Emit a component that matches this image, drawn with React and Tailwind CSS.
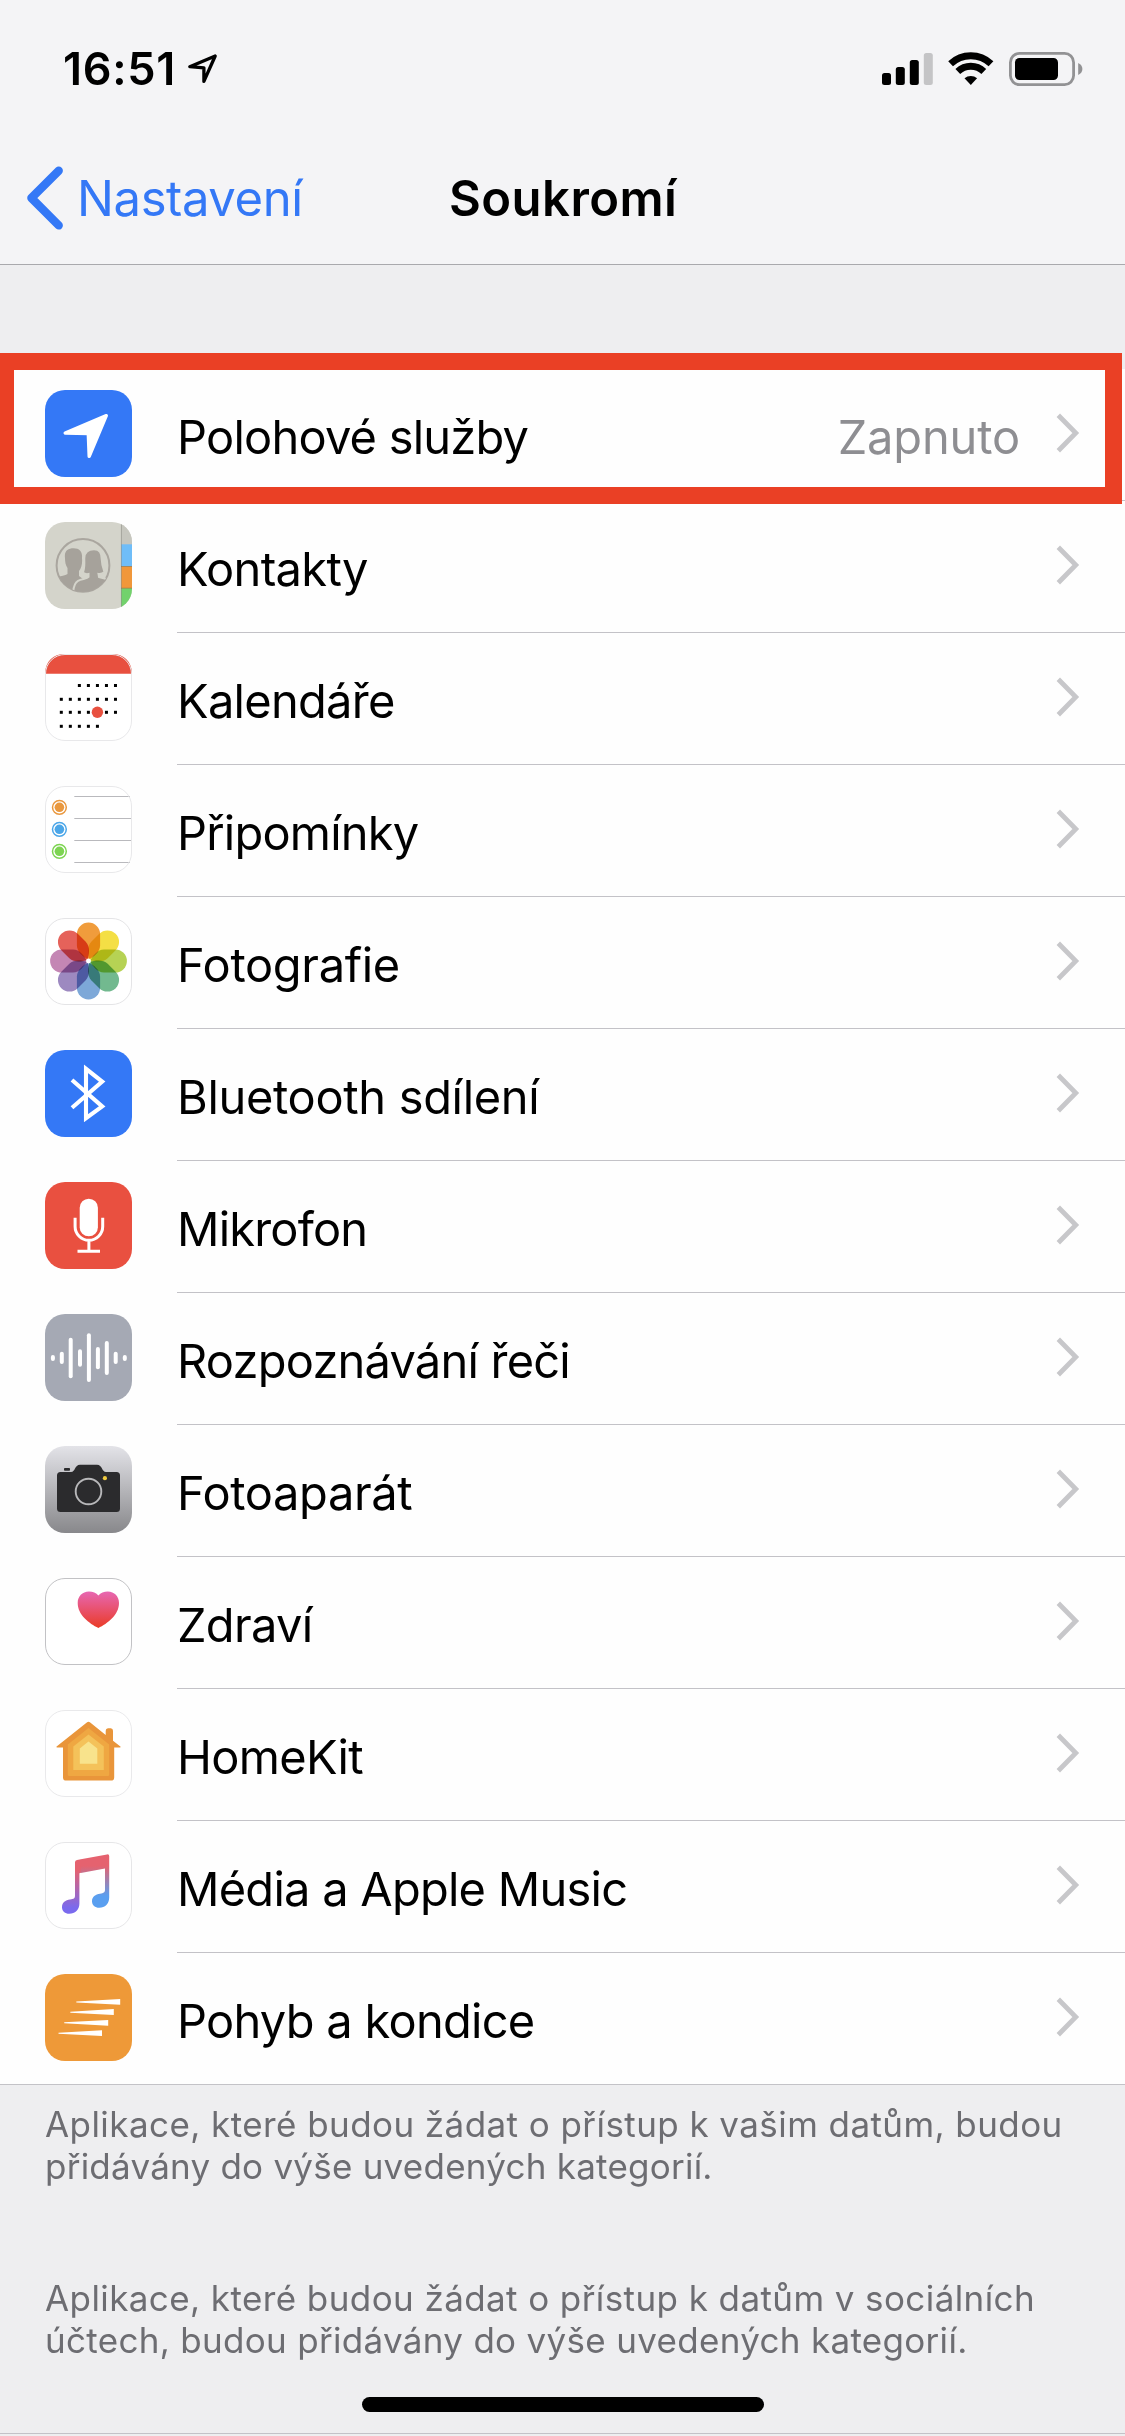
const calendarDots = [
  [2, 3, 4, 5, 6],
  [0, 1, 2, 3, 4, 5, 6],
  [0, 1, 2, 3, 5, 6],
  [0, 1, 2, 3, 4],
];
const calendarRows = [31.5, 45.3, 58.3, 72.3];

const petals = [
  "#f09c3c",
  "#f4df45",
  "#b6d254",
  "#72b98f",
  "#7da8d8",
  "#9d89c0",
  "#c486b4",
  "#e5625a",
];

const waveBars = [
  [7.9, 41, 47],
  [16.8, 37.7, 50],
  [25.7, 23.7, 64.3],
  [35, 35.3, 52.7],
  [43.9, 19.3, 68],
  [52.9, 33, 55.3],
  [61.8, 27, 61],
  [70.7, 37.7, 50],
  [79.8, 41, 47],
];

function Tile({ fill, stroke, children }) {
  return (
    <svg viewBox="0 0 87 87" className="mt-[21px] size-[87px] shrink-0">
      <rect width="87" height="87" rx="20" fill={fill} />
      {children}
      {stroke && (
        <rect x="0.5" y="0.5" width="86" height="86" rx="19.5" fill="none" stroke={stroke} />
      )}
    </svg>
  );
}

function LocationIcon() {
  return (
    <Tile fill="#3478f6">
      <path
        d="M61.3 25.6 L20.2 43 L43.3 43.6 L44.2 66.4 Z"
        fill="#fff"
        stroke="#fff"
        strokeWidth="3.4"
        strokeLinejoin="round"
      />
    </Tile>
  );
}

function ContactsIcon() {
  return (
    <Tile fill="#d4d4cb">
      <defs>
        <clipPath id="contactsTile">
          <rect width="87" height="87" rx="20" />
        </clipPath>
        <clipPath id="contactsCircle">
          <circle cx="38" cy="43.4" r="26.4" />
        </clipPath>
      </defs>
      <g clipPath="url(#contactsTile)">
        <rect x="76" width="11" height="23" fill="#c6c6be" />
        <rect x="76" y="22.3" width="11" height="22.4" fill="#6fbdf8" />
        <rect x="76" y="44.3" width="11" height="22.4" fill="#f0973a" />
        <rect x="76" y="66.3" width="11" height="21" fill="#72d26c" />
        <path d="M76.4 0 V87" stroke="#8f8f88" strokeWidth="1" opacity="0.6" />
        <path d="M76 44.5 H87 M76 66.2 H87" stroke="#7d6a4a" strokeWidth="1" opacity="0.5" />
      </g>
      <circle cx="38" cy="43.4" r="26.4" fill="none" stroke="#aaa69f" strokeWidth="2" />
      <g clipPath="url(#contactsCircle)" fill="#a6a29b">
        <path d="M20 36 C19 29 23 26.3 28.5 26.3 C35 26.3 37.5 30 37 36 C37.5 42 36.5 46 34 49 L34 54 L38 57 L30 63 L28 72 L8 72 L8 56 C14 54 20 54 22.5 52 L22.5 46 C20.5 43 20 40 20 36 Z" />
        <path
          d="M49 27.3 C55 27.3 56.5 31 56.7 37 C56.8 43 58 46 59.5 50 C57.5 52.2 55.5 52.2 53.5 52 L54 55 C60 57 66 57 70 60 L70 74 L28 74 C28 66 29 61 33 58.8 C37 56.8 42 57 43.5 55 L43.5 52 C41.5 52.5 39.5 52 37.8 50.5 C40 46 39.2 41 39.3 36 C39.6 30 43 27.3 49 27.3 Z"
          stroke="#d4d4cb"
          strokeWidth="2"
        />
      </g>
    </Tile>
  );
}

function CalendarIcon() {
  return (
    <Tile fill="#fff" stroke="#e8e8ea">
      {calendarDots.map((cols, r) =>
        cols.map((c) => (
          <rect
            key={`${r}-${c}`}
            x={14.8 + c * 9.03}
            y={calendarRows[r] - 1.5}
            width="3"
            height="3"
            fill="#000"
          />
        ))
      )}
      <circle cx="52.4" cy="58.3" r="5.7" fill="#e8503f" />
      <path d="M0 19.7 C0.3 7.5 8 0 20 0 H67 C79 0 86.7 7.5 87 19.7 Z" fill="#e8503f" />
    </Tile>
  );
}

function RemindersIcon() {
  return (
    <Tile fill="#fff" stroke="#e8e8ea">
      <path
        d="M29.3 10.5 H85 M29.3 32.5 H87 M29.3 54.5 H87 M29.3 76.5 H85"
        stroke="#b9b9bd"
        strokeWidth="1"
      />
      {["#e9983f", "#4ba6e8", "#7dd452"].map((color, i) => (
        <g key={color}>
          <circle cx="14.4" cy={21.3 + i * 22} r="6.9" fill="none" stroke={color} strokeWidth="1.5" />
          <circle cx="14.4" cy={21.3 + i * 22} r="4.8" fill={color} />
        </g>
      ))}
    </Tile>
  );
}

function PhotosIcon() {
  return (
    <Tile fill="#fff" stroke="#e4e4e6">
      <g className="isolate">
        {petals.map((color, i) => (
          <path
            key={color}
            d="M-11.6 -26.8 A11.6 11.6 0 0 1 11.6 -26.8 V-15.5 C11.6 -9 5 -4 0 -1.5 C-5 -4 -11.6 -9 -11.6 -15.5 Z"
            fill={color}
            transform={`translate(43.5 43) rotate(${i * 45})`}
            className="mix-blend-multiply"
          />
        ))}
      </g>
      <circle cx="43.5" cy="43" r="2.4" fill="#fff" />
    </Tile>
  );
}

function BluetoothIcon() {
  return (
    <Tile fill="#3478f6">
      <path
        d="M27 30 L57.2 56.4 L41 68.2 V18.8 L57.2 31.6 L27 57.8"
        fill="none"
        stroke="#fff"
        strokeWidth="4.1"
      />
    </Tile>
  );
}

function MicIcon() {
  return (
    <Tile fill="#e95040">
      <rect x="34.7" y="16.7" width="18.2" height="37.6" rx="9.1" fill="#fff" />
      <path
        d="M30.1 35.7 V44.5 A13.8 13.8 0 0 0 57.7 44.5 V35.7 M43.9 58.3 V69 M32.5 69.2 H55"
        fill="none"
        stroke="#fff"
        strokeWidth="3"
      />
    </Tile>
  );
}

function SpeechIcon() {
  return (
    <Tile fill="#a5a9b4">
      {waveBars.map(([x, top, bottom]) => (
        <rect key={x} x={x - 2} y={top} width="4" height={bottom - top} rx="2" fill="#fff" />
      ))}
    </Tile>
  );
}

function CameraIcon() {
  return (
    <Tile fill="url(#cameraBg)">
      <defs>
        <linearGradient id="cameraBg" x1="0" y1="0" x2="0" y2="1">
          <stop offset="0" stopColor="#e3e3e8" />
          <stop offset="1" stopColor="#88888b" />
        </linearGradient>
      </defs>
      <path
        d="M15.5 26 H26 C30.5 26 29.5 18.8 35 18.8 H52 C57.5 18.8 56.5 26 61 26 H71.5 Q75 26 75 29.5 V62.5 Q75 66 71.5 66 H15.5 Q12 66 12 62.5 V29.5 Q12 26 15.5 26 Z"
        fill="#2b2b2d"
      />
      <rect x="19" y="22" width="6" height="2.7" rx="0.8" fill="#2b2b2d" />
      <circle cx="43.5" cy="45.5" r="12.8" fill="none" stroke="#b8b8ba" strokeWidth="1.9" />
      <circle cx="59.9" cy="32.2" r="2.1" fill="#f0cb40" />
    </Tile>
  );
}

function HealthIcon() {
  return (
    <Tile fill="#fff" stroke="#c2c2c5">
      <defs>
        <linearGradient id="heart" x1="0" y1="0" x2="0" y2="1">
          <stop offset="0" stopColor="#e767b2" />
          <stop offset="1" stopColor="#ea3b26" />
        </linearGradient>
      </defs>
      <path
        d="M53.4 17.6 C55.5 15 59 13.6 62.8 13.6 C69.4 13.6 74 18.6 74 25 C74 37 62.5 45.5 53.4 50 C44.3 45.5 32.7 37 32.7 25 C32.7 18.6 37.3 13.6 43.9 13.6 C47.8 13.6 51.3 15 53.4 17.6 Z"
        fill="url(#heart)"
      />
    </Tile>
  );
}

function HomeIcon() {
  return (
    <Tile fill="#fff" stroke="#e9e9eb">
      <path
        d="M41.8 12.6 Q43.5 11 45.2 12.6 L60.7 25 V20.8 Q60.7 18.3 63 18.3 H65.8 Q68 18.3 68 20.8 V30.8 L75.4 36.6 Q76 37.4 75 37.4 H69.2 V67.4 Q69.2 70.6 66 70.6 H21.2 Q18 70.6 18 67.4 V37.4 H12 Q11 37.4 11.6 36.6 Z"
        fill="#e9953a"
      />
      <path d="M43.5 18 L64.2 34.5 V64.4 Q64.2 66 62.6 66 H24.4 Q22.8 66 22.8 64.4 V34.5 Z" fill="#efa742" />
      <path d="M43.5 24.5 L58.8 36.5 V60 H28.3 V36.5 Z" fill="#f4c25a" />
      <path d="M43.5 31.5 L52.3 38.5 V53.8 H34.8 V38.5 Z" fill="#f8e38c" />
    </Tile>
  );
}

function MusicIcon() {
  return (
    <Tile fill="#fff" stroke="#e6e6e8">
      <defs>
        <linearGradient id="noteLeft" gradientUnits="userSpaceOnUse" x1="0" y1="28" x2="0" y2="66">
          <stop offset="0" stopColor="#e5626f" />
          <stop offset="1" stopColor="#7a6aee" />
        </linearGradient>
        <linearGradient id="noteRight" gradientUnits="userSpaceOnUse" x1="0" y1="24" x2="0" y2="54">
          <stop offset="0" stopColor="#e5626f" />
          <stop offset="1" stopColor="#5a9ff0" />
        </linearGradient>
      </defs>
      <path
        d="M30 20.3 Q30 18.4 32 18 L36 17.2 V30.8 L34.4 31.2 V61.5 C34.4 68 30 71.8 24.3 71.8 C20 71.8 17 69 17 65.2 C17 60.5 20.5 58.2 25 57.6 C28.8 57 30 56.4 30 53.5 Z"
        fill="url(#noteLeft)"
      />
      <path
        d="M35.8 17.2 L62 12.4 Q64.2 12 64.2 14 V55.5 C64.2 62 60 65.8 54.3 65.8 C50 65.8 47 63 47 59.2 C47 54.5 50.5 52.4 55 51.7 C58.8 51 60 50.4 60 47.5 V26.4 L35.8 30.9 Z"
        fill="url(#noteRight)"
      />
    </Tile>
  );
}

function MotionIcon() {
  return (
    <Tile fill="#ee9938">
      <path
        d="M31.3 27.4 L75.2 25 V30.7 L31.3 28.4 Z M25.3 37.7 L68.8 35 V41 L25.3 38.7 Z M19.2 48.2 L63.2 46 V51.7 L19.2 49.2 Z M13.5 58.7 L57 56.3 V62 L13.5 59.7 Z"
        fill="#fff"
      />
    </Tile>
  );
}

const items = [
  { label: "Polohové služby", icon: LocationIcon, tracking: "tracking-[-0.78px]", value: "Zapnuto" },
  { label: "Kontakty", icon: ContactsIcon, tracking: "tracking-[-0.68px]" },
  { label: "Kalendáře", icon: CalendarIcon, tracking: "tracking-[-0.7px]" },
  { label: "Připomínky", icon: RemindersIcon, tracking: "tracking-[-0.8px]" },
  { label: "Fotografie", icon: PhotosIcon, tracking: "tracking-[-0.34px]" },
  { label: "Bluetooth sdílení", icon: BluetoothIcon, tracking: "tracking-[-0.33px]" },
  { label: "Mikrofon", icon: MicIcon, tracking: "tracking-[-0.8px]" },
  { label: "Rozpoznávání řeči", icon: SpeechIcon, tracking: "tracking-[-0.78px]" },
  { label: "Fotoaparát", icon: CameraIcon, tracking: "tracking-[-0.38px]" },
  { label: "Zdraví", icon: HealthIcon, tracking: "tracking-[-0.7px]" },
  { label: "HomeKit", icon: HomeIcon, tracking: "tracking-[-0.7px]" },
  { label: "Média a Apple Music", icon: MusicIcon, tracking: "tracking-[-0.75px]" },
  { label: "Pohyb a kondice", icon: MotionIcon, tracking: "tracking-[-0.73px]" },
];

function StatusBar() {
  return (
    <div className="flex h-[132px] items-start justify-between pt-[52px] pr-[42px] pl-[62px]">
      <div className="flex">
        <span className="w-[125px] pl-px text-[45px] leading-[34px] font-semibold tracking-[0.7px]">16:51</span>
        <svg viewBox="0 0 32 32" className="mt-[1px] size-8">
          <path
            d="M28.2 3 L2.8 13.7 L16.9 14.8 L16.9 28.4 Z"
            fill="none"
            stroke="#000"
            strokeWidth="3.3"
            strokeLinejoin="round"
          />
        </svg>
      </div>
      <svg viewBox="0 0 201 34" className="h-[34px] w-[201px]">
        <rect x="0" y="21" width="9" height="12" rx="2.5" />
        <rect x="13.8" y="15" width="9" height="18" rx="2.5" />
        <rect x="27.8" y="8" width="9" height="25" rx="2.5" />
        <rect x="41.8" y="1" width="9" height="32" rx="2.5" fill="#c4c4c6" />
        <path d="M68.6 11.8 A29.3 29.3 0 0 1 109 11.8" fill="none" stroke="#000" strokeWidth="6.9" />
        <path d="M75.8 19.4 A18.8 18.8 0 0 1 101.8 19.4" fill="none" stroke="#000" strokeWidth="6.9" />
        <path d="M88.8 33 L82.5 26.2 A9.8 9.8 0 0 1 95.1 26.2 Z" />
        <rect x="128.4" y="1.4" width="63.2" height="31.2" rx="9" fill="none" stroke="#929294" strokeWidth="2.8" />
        <rect x="133" y="6" width="43" height="22" rx="4.5" />
        <path d="M196.2 11 C201.8 13.5 201.8 20.5 196.2 23 Z" fill="#929294" />
      </svg>
    </div>
  );
}

function NavBar() {
  return (
    <div className="grid h-[132px] grid-cols-[449px_1fr] items-center leading-[60px]">
      <a className="flex items-center pl-[26px] text-[49px] tracking-[-0.4px] text-[#3478f6]">
        <svg viewBox="0 0 38 66" className="h-[66px] w-[38px]">
          <path
            d="M32.7 5.8 L5.4 33 L32.7 60.4"
            fill="none"
            stroke="currentColor"
            strokeWidth="8.4"
            strokeLinecap="round"
            strokeLinejoin="round"
          />
        </svg>
        <span className="ml-[13px] pt-[2px]">Nastavení</span>
      </a>
      <h1 className="pt-[2px] text-[49px] font-semibold tracking-[0.45px]">Soukromí</h1>
    </div>
  );
}

function Row({ item }) {
  const Icon = item.icon;
  return (
    <li className="flex h-[132px] pl-[45px] last:border-b last:border-[#c3c2c7]">
      <Icon />
      <div className="ml-[45px] flex flex-1 items-center border-b border-[#c3c2c7] pr-[45px] text-[47px] leading-[56px] in-[li:last-child]:border-b-0">
        <span className={`pt-1 ${item.tracking}`}>{item.label}</span>
        <span className="flex-1" />
        {item.value && <span className="pt-1 tracking-[-0.15px] text-[#8e8e92]">{item.value}</span>}
        <svg viewBox="0 0 24 40" className="-mt-[3px] ml-[36px] h-10 w-6">
          <path d="M2.3 2.2 L19.8 20 L2.3 37.8" fill="none" stroke="#c7c7ca" strokeWidth="4.8" />
        </svg>
      </div>
    </li>
  );
}

export default function App() {
  return (
    <div className="flex h-[2436px] w-[1125px] flex-col overflow-hidden bg-[#eeeef0] font-['Inter','Liberation_Sans',sans-serif] text-black">
      <header className="h-[265px] border-b border-[#a9a9ad] bg-[#f4f4f6]">
        <StatusBar />
        <NavBar />
      </header>

      <main className="pt-[104px]">
        <div className="relative">
          <ul className="bg-[#fefefe]">
            {items.map((item) => (
              <Row key={item.label} item={item} />
            ))}
          </ul>
          {/* highlighted first row */}
          <div className="absolute -top-[15.7px] left-0 h-[150.4px] w-[1122.4px] border-[17.4px] border-l-[14px] border-[#ea4025]" />
        </div>

        <div className="px-[45px] pt-[18px] text-[35px] leading-[42px] whitespace-nowrap text-[#6d6d72]">
          <p>
            <span className="block tracking-[0.43px]">
              Aplikace, které budou žádat o přístup k vašim datům, budou
            </span>
            <span className="block tracking-[0.24px]">přidávány do výše uvedených kategorií.</span>
          </p>
          <p className="mt-[90px]">
            <span className="block tracking-[0.41px]">
              Aplikace, které budou žádat o přístup k datům v sociálních
            </span>
            <span className="block tracking-[0.31px]">
              účtech, budou přidávány do výše uvedených kategorií.
            </span>
          </p>
        </div>
      </main>

      <div className="mt-auto mb-[2px] flex h-[37px] justify-center border-b border-[#c3c2c7]">
        <div className="h-[15px] w-[402px] rounded-full bg-black" />
      </div>
    </div>
  );
}
